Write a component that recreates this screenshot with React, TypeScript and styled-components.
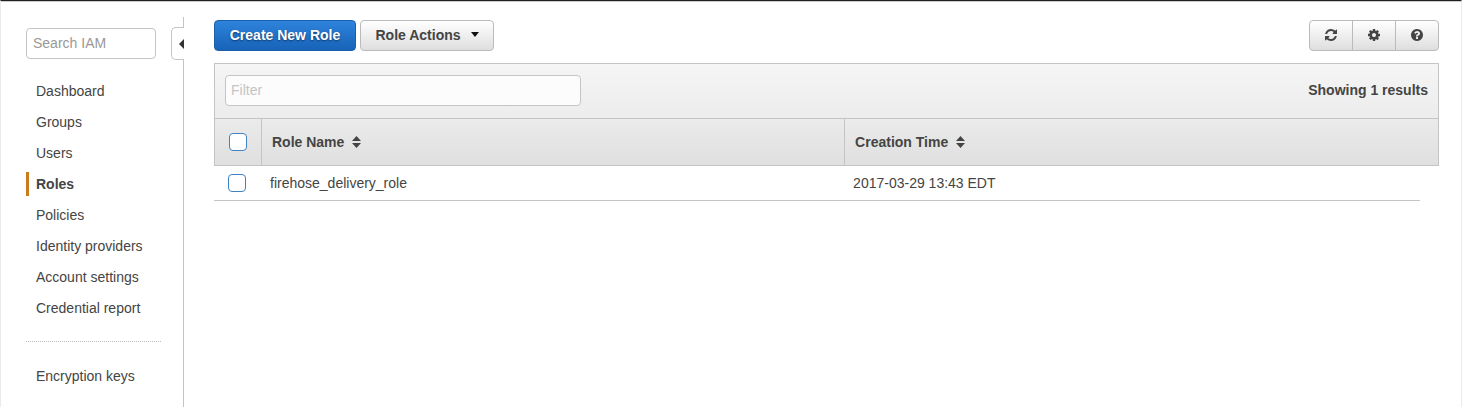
import React from "react";
import styled, { createGlobalStyle, css } from "styled-components";

const line = "#c4c4c4";
const ink = "#444";

const GlobalStyle = createGlobalStyle`
  *, *::before, *::after { box-sizing: border-box; }
  body {
    margin: 0;
    background: #fff;
    color: ${ink};
    font: 14px/20px "Liberation Sans", Arial, sans-serif;
  }
  button, input { font: inherit; color: inherit; }
`;

const Page = styled.div`
  display: flex;
  min-height: 100vh;
  border-top: 1px solid #231f20;
  border-left: 1px solid #ebebeb;
  border-right: 1px solid #ebebeb;
  box-shadow: inset 0 1px #ccc;
`;

const Sidebar = styled.aside`
  position: relative;
  flex: 0 0 183px;
  margin-top: 16px;
  padding: 11px 22px 16px 25px;
  border-right: 1px solid ${line};
`;

const SearchInput = styled.input`
  display: block;
  width: 130px;
  height: 31px;
  margin: 0 0 20px;
  padding: 0 6px 2px;
  border: 1px solid ${line};
  border-radius: 4px;
  background: #fff;
  &::placeholder { color: #999; opacity: 1; }
`;

const CollapseButton = styled.button`
  position: absolute;
  top: 10px;
  right: -1px;
  display: flex;
  align-items: center;
  justify-content: flex-end;
  width: 13px;
  height: 33px;
  padding: 0;
  border: 1px solid ${line};
  border-right: 0;
  border-radius: 5px 0 0 5px;
  background: #fff;
`;

const NavList = styled.ul`
  display: flex;
  flex-direction: column;
  gap: 7px;
  margin: 0;
  padding: 0;
  list-style: none;
`;

const NavLink = styled.a<{ $active?: boolean }>`
  display: block;
  padding: 2px 0 2px 7px;
  border-left: 3px solid transparent;
  color: ${ink};
  text-decoration: none;
  white-space: nowrap;
  ${(p) => p.$active && css`
    border-left-color: #cc7a1b;
    font-weight: bold;
  `}
`;

const Divider = styled.hr`
  margin: 21px 0 22px;
  border: 0;
  border-top: 1px dotted #bbb;
`;

const Main = styled.main`
  flex: 1;
  min-width: 0;
  padding: 19px 22px 24px 30px;
`;

const Toolbar = styled.div`
  display: flex;
  gap: 4px;
  margin-bottom: 12px;
`;

const Button = styled.button<{ $primary?: boolean }>`
  display: flex;
  align-items: center;
  justify-content: center;
  gap: 10px;
  min-width: 134px;
  height: 31px;
  padding: 0 14px 2px;
  border: 1px solid #bbb;
  border-radius: 4px;
  background: linear-gradient(#fff, #dedede);
  font-weight: bold;
  white-space: nowrap;
  ${(p) => p.$primary && css`
    min-width: 142px;
    border-color: #1a5fa8;
    background: linear-gradient(#2e83dc, #1763b8);
    color: #fff;
    text-shadow: 0 1px 2px rgba(0, 0, 0, 0.5);
  `}
`;

const IconGroup = styled.div`
  display: flex;
  margin-left: auto;
`;

const IconButton = styled(Button)`
  min-width: 44px;
  padding: 0 0 2px;
  border-radius: 0;
  & + & { margin-left: -1px; }
  &:first-child { border-radius: 4px 0 0 4px; }
  &:last-child { border-radius: 0 4px 4px 0; }
`;

const FilterBar = styled.div`
  display: flex;
  align-items: center;
  justify-content: space-between;
  padding: 11px 10px 12px;
  border: 1px solid ${line};
  border-bottom: 0;
  background: linear-gradient(#f5f5f5, #ececec);
`;

const FilterInput = styled.input`
  width: 356px;
  height: 31px;
  padding: 0 5px 2px;
  border: 1px solid ${line};
  border-radius: 4px;
  background: #fcfcfc;
  &::placeholder { color: #c4c4c4; opacity: 1; }
`;

const ResultCount = styled.strong`
  padding-bottom: 2px;
`;

const Table = styled.table`
  width: 100%;
  table-layout: fixed;
  border-collapse: separate;
  border-spacing: 0;
`;

const CheckCol = styled.col`width: 48px;`;
const NameCol = styled.col`width: 47.6%;`;
const GutterCol = styled.col`width: 19px;`;

const HeadRow = styled.tr`
  background: linear-gradient(#ebebeb, #dfdfdf);
`;

const HeadCell = styled.th`
  height: 48px;
  padding: 0 10px;
  border: 1px solid ${line};
  border-left: 0;
  text-align: left;
  &:first-child {
    padding: 0 0 0 14px;
    border-left: 1px solid ${line};
  }
`;

const SortButton = styled.button`
  display: flex;
  align-items: center;
  gap: 8px;
  padding: 0;
  border: 0;
  background: none;
  font-weight: bold;
`;

const Cell = styled.td`
  height: 35px;
  padding: 0 8px;
  border-bottom: 1px solid ${line};
  &:first-child { padding: 0 0 0 14px; }
`;

const Gutter = styled.td`
  padding: 0;
`;

const Checkbox = styled.input`
  appearance: none;
  display: block;
  width: 18px;
  height: 18px;
  margin: 0;
  border: 1px solid #3f82c4;
  border-radius: 4px;
  background: #fff;
  &:checked { background: #3f82c4; }
`;

const iconPaths = {
  refresh:
    "M1639 1056q0 5-1 7-64 268-268 434.5t-478 166.5q-146 0-282.5-55t-243.5-157l-129 129q-19 19-45 19t-45-19-19-45v-448q0-26 19-45t45-19h448q26 0 45 19t19 45-19 45l-137 137q71 66 161 102t187 36q134 0 250-65t186-179q11-17 53-117 8-23 30-23h192q13 0 22.5 9.5t9.5 22.5zm25-800v448q0 26-19 45t-45 19h-448q-26 0-45-19t-19-45 19-45l138-138q-148-137-349-137-134 0-250 65t-186 179q-11 17-53 117-8 23-30 23h-199q-13 0-22.5-9.5t-9.5-22.5v-7q65-268 270-434.5t480-166.5q146 0 284 55.5t245 156.5l130-129q19-19 45-19t45 19 19 45z",
  cog:
    "M1152 896q0-106-75-181t-181-75-181 75-75 181 75 181 181 75 181-75 75-181zm512-109v222q0 12-8 23t-20 13l-185 28q-19 54-39 91 35 50 107 138 10 12 10 25t-9 23q-27 37-99 108t-94 71q-12 0-26-9l-138-108q-44 23-91 38-16 136-29 186-7 28-36 28h-222q-14 0-24.5-8.5t-11.5-21.5l-28-184q-49-16-90-37l-141 107q-10 9-25 9-14 0-25-11-126-114-165-168-7-10-7-23 0-12 8-23 15-21 51-66.5t54-70.5q-27-50-41-99l-183-27q-13-2-21-12.5t-8-23.5v-222q0-12 8-23t19-13l186-28q14-46 39-92-40-57-107-138-10-12-10-24 0-10 9-23 26-36 98.5-107.5t94.5-71.5q13 0 26 10l138 107q44-23 91-38 16-136 29-186 7-28 36-28h222q14 0 24.5 8.5t11.5 21.5l28 184q49 16 90 37l142-107q9-9 24-9 13 0 25 10 129 119 165 170 7 8 7 22 0 12-8 23-15 21-51 66.5t-54 70.5q26 50 41 98l183 28q13 2 21 12.5t8 23.5z",
  help:
    "M1024 1376v-192q0-14-9-23t-23-9h-192q-14 0-23 9t-9 23v192q0 14 9 23t23 9h192q14 0 23-9t9-23zm256-672q0-88-55.5-163t-138.5-116-170-41q-243 0-371 213-15 24 8 42l132 100q7 6 19 6 16 0 25-12 53-68 86-92 34-24 86-24 48 0 85.5 26t37.5 59q0 38-20 61t-68 45q-63 28-115.5 86.5t-52.5 125.5v36q0 14 9 23t23 9h192q14 0 23-9t9-23q0-19 21.5-49.5t54.5-49.5q32-18 49-28.5t46-35 44.5-48 28-60.5 12.5-81zm384 192q0 209-103 385.5t-279.5 279.5-385.5 103-385.5-103-279.5-279.5-103-385.5 103-385.5 279.5-279.5 385.5-103 385.5 103 279.5 279.5 103 385.5z",
};

const Icon = ({ name }: { name: keyof typeof iconPaths }) => (
  <svg width="14" height="14" viewBox="0 0 1792 1792" fill="currentColor" aria-hidden="true">
    <path d={iconPaths[name]} />
  </svg>
);

const SortIcon = () => (
  <svg width="9" height="12" viewBox="0 0 9 12" fill="currentColor" aria-hidden="true">
    <path d="M4.500 0 9 5H0zM4.500 12 9 7H0z" />
  </svg>
);

const links = [
  "Dashboard",
  "Groups",
  "Users",
  "Roles",
  "Policies",
  "Identity providers",
  "Account settings",
  "Credential report",
];

const roles = [{ name: "firehose_delivery_role", created: "2017-03-29 13:43 EDT" }];

export default function App() {
  return (
    <>
      <GlobalStyle />
      <Page>
        <Sidebar>
          <SearchInput type="text" placeholder="Search IAM" aria-label="Search IAM" />
          <CollapseButton type="button" aria-label="Collapse navigation">
            <svg width="5" height="10" viewBox="0 0 5 10" fill="#333" aria-hidden="true">
              <path d="M5 0v10L0 5z" />
            </svg>
          </CollapseButton>
          <nav>
            <NavList>
              {links.map((label) => (
                <li key={label}>
                  <NavLink href="#" $active={label === "Roles"}>{label}</NavLink>
                </li>
              ))}
            </NavList>
            <Divider />
            <NavList>
              <li><NavLink href="#">Encryption keys</NavLink></li>
            </NavList>
          </nav>
        </Sidebar>
        <Main>
          <Toolbar>
            <Button type="button" $primary>Create New Role</Button>
            <Button type="button">
              Role Actions
              <svg width="8" height="5" viewBox="0 0 8 5" fill="#111" aria-hidden="true">
                <path d="M0 0h8L4 5z" />
              </svg>
            </Button>
            <IconGroup>
              <IconButton type="button" aria-label="Refresh"><Icon name="refresh" /></IconButton>
              <IconButton type="button" aria-label="Settings"><Icon name="cog" /></IconButton>
              <IconButton type="button" aria-label="Help"><Icon name="help" /></IconButton>
            </IconGroup>
          </Toolbar>
          <FilterBar>
            <FilterInput type="text" placeholder="Filter" aria-label="Filter" />
            <ResultCount>Showing 1 results</ResultCount>
          </FilterBar>
          <Table>
            <colgroup>
              <CheckCol />
              <NameCol />
              <col />
              <GutterCol />
            </colgroup>
            <thead>
              <HeadRow>
                <HeadCell><Checkbox type="checkbox" aria-label="Select all roles" /></HeadCell>
                <HeadCell><SortButton type="button">Role Name <SortIcon /></SortButton></HeadCell>
                <HeadCell colSpan={2}><SortButton type="button">Creation Time <SortIcon /></SortButton></HeadCell>
              </HeadRow>
            </thead>
            <tbody>
              {roles.map((role) => (
                <tr key={role.name}>
                  <Cell><Checkbox type="checkbox" aria-label={"Select " + role.name} /></Cell>
                  <Cell>{role.name}</Cell>
                  <Cell>{role.created}</Cell>
                  <Gutter />
                </tr>
              ))}
            </tbody>
          </Table>
        </Main>
      </Page>
    </>
  );
}
